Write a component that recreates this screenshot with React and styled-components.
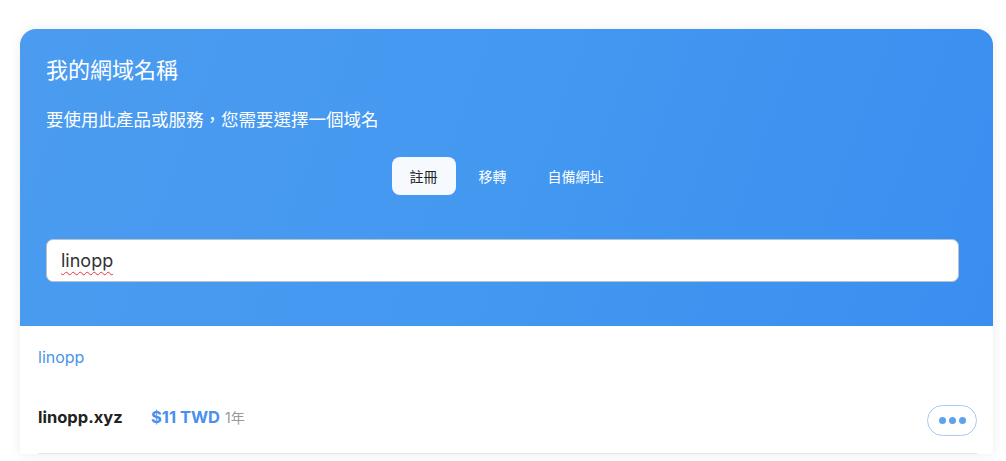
import React from "react";
import styled, {createGlobalStyle} from "styled-components";

const GlobalStyle = createGlobalStyle`
  body {
    margin: 0;
    background: #ffffff;
    font-family: Inter, "Noto Sans CJK TC", sans-serif;
  }
`;

const tabs = ["註冊", "移轉", "自備網址"];

const App = () => {
    return (
        <Page>
            <GlobalStyle/>
            <Card>
                <Header>
                    <Title>我的網域名稱</Title>
                    <Subtitle>要使用此產品或服務，您需要選擇一個域名</Subtitle>
                    <Tabs>
                        {tabs.map((t, i) => (
                            <Tab key={t} $active={i === 0}>{t}</Tab>
                        ))}
                    </Tabs>
                    <SearchBox>
                        <SearchInput defaultValue="linopp" spellCheck={false}/>
                        <Squiggle>linopp</Squiggle>
                    </SearchBox>
                </Header>
                <Body>
                    <Query>linopp</Query>
                    <ResultRow>
                        <DomainName>linopp.xyz</DomainName>
                        <Price>$11 TWD</Price>
                        <Period>1年</Period>
                        <MoreButton>
                            <Dot/><Dot/><Dot/>
                        </MoreButton>
                    </ResultRow>
                </Body>
            </Card>
        </Page>
    );
};

const Page = styled.div`
  padding: 29px 13px 0 20px;
  height: 461px;
  box-sizing: border-box;
  overflow: hidden;
`;

const Card = styled.div`
  border-radius: 16px 16px 0 0;
  background: #fff;
  box-shadow: 0 0 12px rgba(0, 0, 0, 0.08);
  overflow: hidden;
`;

const Header = styled.div`
  background: linear-gradient(110deg, #4b9cf0 0%, #4398f0 50%, #3a8ef0 100%);
  padding: 25px 34px 44px 26px;
  display: flex;
  flex-direction: column;
`;

const Title = styled.h1`
  margin: 0;
  font-family: "Noto Sans CJK TC", sans-serif;
  font-weight: 400;
  font-size: 22px;
  line-height: 28px;
  color: #fff;
`;

const Subtitle = styled.p`
  margin: 25px 0 0;
  font-family: "Noto Sans CJK TC", sans-serif;
  font-size: 17.5px;
  line-height: 24px;
  color: #fff;
`;

const Tabs = styled.div`
  display: flex;
  justify-content: center;
  gap: 5px;
  margin-top: 26px;
  padding-left: 8px;
`;

const Tab = styled.div`
  padding: 0 18px;
  height: 38px;
  display: flex;
  align-items: center;
  border-radius: 8px;
  font-family: "Noto Sans CJK TC", sans-serif;
  font-size: 14px;
  color: ${(p) => (p.$active ? "#222" : "#fff")};
  background: ${(p) => (p.$active ? "#f6f9fd" : "transparent")};
`;

const SearchBox = styled.div`
  position: relative;
  margin-top: 44px;
`;

const SearchInput = styled.input`
  display: block;
  height: 43px;
  box-sizing: border-box;
  width: 100%;
  border: 1px solid #b9c2cc;
  border-radius: 7px;
  padding: 0 14px;
  font-family: Inter, sans-serif;
  font-size: 18px;
  color: #333;
  background: #fff;
  outline: none;
`;

const Squiggle = styled.span`
  position: absolute;
  left: 15px;
  top: 0;
  line-height: 43px;
  font-family: Inter, sans-serif;
  font-size: 18px;
  color: transparent;
  pointer-events: none;
  text-decoration: underline wavy #e33;
  text-decoration-thickness: 1px;
  text-underline-offset: 4px;
`;

const Body = styled.div`
  padding: 19px 16px 0 18px;
`;

const Query = styled.div`
  font-size: 16px;
  color: #4a94ea;
  line-height: 24px;
`;

const ResultRow = styled.div`
  display: flex;
  align-items: center;
  margin-top: 29px;
  padding: 2px 0 19px;
  border-bottom: 1px solid #e6e6e6;
  height: 34px;
`;

const DomainName = styled.span`
  font-size: 16.5px;
  font-weight: 700;
  color: #222;
  width: 113px;
`;

const Price = styled.span`
  font-size: 16.5px;
  font-weight: 700;
  color: #4a90ec;
`;

const Period = styled.span`
  margin-left: 5px;
  font-size: 14px;
  color: #999;
  font-family: Inter, "Noto Sans CJK TC", sans-serif;
`;

const MoreButton = styled.button`
  margin-left: auto;
  margin-top: 6px;
  width: 50px;
  height: 31px;
  border: 1px solid #a6cbf4;
  border-radius: 16px;
  background: #fff;
  display: flex;
  align-items: center;
  justify-content: center;
  gap: 3px;
  padding: 0;
`;

const Dot = styled.span`
  width: 7px;
  height: 7px;
  border-radius: 50%;
  background: #5ea2ee;
`;

export default App;
